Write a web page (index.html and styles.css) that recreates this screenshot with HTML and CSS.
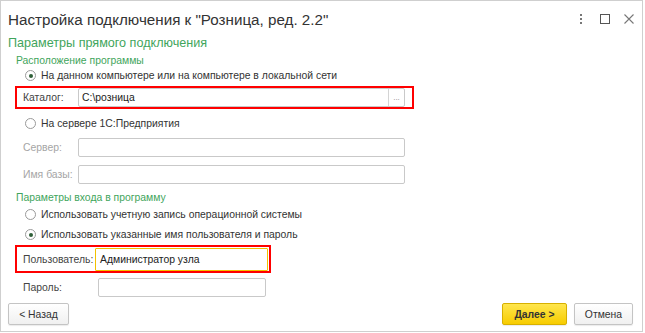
FILE: index.html
```html
<!DOCTYPE html>
<html lang="ru">
<head>
<meta charset="utf-8">
<link rel="stylesheet" href="styles.css">
</head>
<body>
<div class="window">
  <div class="header">
    <div class="title">Настройка подключения к "Розница, ред. 2.2"</div>
    <div class="tools">
      <svg class="tool" width="12" height="12" viewBox="0 0 12 12"><rect x="5" y="1" width="2" height="2" fill="#777"/><rect x="5" y="5" width="2" height="2" fill="#777"/><rect x="5" y="9" width="2" height="2" fill="#777"/></svg>
      <svg class="tool" width="12" height="12" viewBox="0 0 12 12"><rect x="1.5" y="1.5" width="9" height="9" fill="none" stroke="#555" stroke-width="1"/></svg>
      <svg class="tool" width="12" height="12" viewBox="0 0 12 12"><path d="M1.5 1.5 L10.5 10.5 M10.5 1.5 L1.5 10.5" stroke="#777" stroke-width="1.1"/></svg>
    </div>
  </div>
  <div class="content">
    <div class="section-title">Параметры прямого подключения</div>
    <div class="group">
      <div class="group-title first">Расположение программы</div>
      <div class="radio-row r1"><span class="radio checked"></span><span>На данном компьютере или на компьютере в локальной сети</span></div>
      <div class="field-row marked">
        <span class="label">Каталог:</span>
        <div class="input wide with-btn"><span class="value">C:\розница</span><span class="pick">...</span></div>
      </div>
      <div class="radio-row r2"><span class="radio"></span><span>На сервере 1С:Предприятия</span></div>
      <div class="field-row plain">
        <span class="label disabled">Сервер:</span>
        <div class="input wide"></div>
      </div>
      <div class="field-row plain">
        <span class="label disabled">Имя базы:</span>
        <div class="input wide"></div>
      </div>
      <div class="group-title second">Параметры входа в программу</div>
      <div class="radio-row r3"><span class="radio"></span><span>Использовать учетную запись операционной системы</span></div>
      <div class="radio-row r4"><span class="radio checked"></span><span>Использовать указанные имя пользователя и пароль</span></div>
      <div class="field-row marked user">
        <span class="label">Пользователь:</span>
        <div class="input focused"><span class="value">Администратор узла</span></div>
      </div>
      <div class="field-row plain pass">
        <span class="label">Пароль:</span>
        <div class="input short"></div>
      </div>
    </div>
  </div>
  <div class="footer">
    <button class="btn back">&lt; Назад</button>
    <div class="spacer"></div>
    <button class="btn primary">Далее &gt;</button>
    <button class="btn cancel">Отмена</button>
  </div>
</div>
</body>
</html>
```
FILE: styles.css
```css
html, body {
  margin: 0;
  padding: 0;
  background: #ffffff;
}
body {
  font-family: "Liberation Sans", Arial, sans-serif;
  font-size: 10.4px;
  color: #333333;
}
.window {
  width: 641px;
  height: 330px;
  border: 1px solid #cfcfcf;
  display: flex;
  flex-direction: column;
}
.header {
  height: 33px;
  display: flex;
  align-items: center;
  padding: 0 7px 0 7px;
}
.title {
  font-size: 15.2px;
  color: #333;
  flex: 1;
  padding-top: 3px;
}
.tools {
  display: flex;
  gap: 12px;
  align-items: center;
  padding-top: 2px;
}
.tool { display: block; }
.content {
  flex: 1;
  padding: 0 0 0 7px;
}
.section-title {
  color: #3fa55c;
  font-size: 12.6px;
  height: 16px;
  line-height: 16px;
  margin-top: 1px;
}
.group {
  padding-left: 8px;
}
.group-title {
  color: #3fa55c;
  font-size: 10.4px;
  height: 14px;
  line-height: 14px;
}
.group-title.first { margin-top: 3px; }
.group-title.second { margin-top: 7px; }
.radio-row {
  display: flex;
  align-items: center;
  height: 17px;
  padding-left: 9px;
  gap: 5px;
  white-space: nowrap;
}
.radio-row.r1 { margin-top: -1px; }
.radio-row.r2 { margin-top: 8px; }
.radio-row.r3 { margin-top: 1px; }
.radio-row.r4 { margin-top: 3px; }
.radio {
  width: 11px;
  height: 11px;
  border: 1px solid #9a9a9a;
  border-radius: 50%;
  box-sizing: border-box;
  display: inline-flex;
  align-items: center;
  justify-content: center;
  background: #fff;
  flex: none;
}
.radio.checked::after {
  content: "";
  width: 4px;
  height: 4px;
  border-radius: 50%;
  background: #2f5f38;
}
.field-row {
  display: flex;
  align-items: center;
  padding-left: 6px;
  margin-left: 1px;
}
.field-row.marked {
  outline: 2px solid #ff0000;
  width: 382px;
  padding-right: 7px;
  margin-top: 4px;
  margin-bottom: 5px;
}
.field-row.plain {
  height: 19px;
  margin-top: 6px;
}
.field-row.plain + .field-row.plain { margin-top: 8px; }
.label {
  width: 55px;
  flex: none;
  color: #444;
  white-space: nowrap;
}
.label.disabled { color: #a5a5a5; }
.input {
  height: 19px;
  box-sizing: border-box;
  border: 1px solid #c9c9c9;
  border-radius: 2px;
  display: flex;
  align-items: center;
  background: #fff;
  padding-left: 3px;
  color: #222;
  flex: none;
}
.input.wide { width: 327px; }
.input.with-btn { padding-right: 0; }
.input .value { flex: 1; }
.pick {
  width: 15px;
  height: 17px;
  border-left: 1px solid #d4d4d4;
  color: #888;
  font-size: 8px;
  text-align: center;
  line-height: 17px;
}
.field-row.user {
  width: 245px;
  height: 24px;
  padding-right: 1px;
  margin-top: 4px;
  margin-bottom: 0;
}
.field-row.user .label { width: 72px; }
.input.focused {
  width: 173px;
  height: 23px;
  border: 1px solid #f2c200;
  border-radius: 1px;
  padding-left: 4px;
}
.field-row.pass { margin-top: 7px; }
.field-row.pass .label { width: 75px; }
.input.short { width: 168px; }
.footer {
  display: flex;
  align-items: center;
  padding: 0 9px 4px 7px;
  height: 26px;
  gap: 7px;
}
.spacer { flex: 1; }
.btn {
  font-family: "Liberation Sans", Arial, sans-serif;
  font-size: 10.4px;
  height: 22px;
  border: 1px solid #c4c4c4;
  border-radius: 2px;
  background: linear-gradient(#ffffff, #f0f0f0);
  color: #333;
  padding: 0;
  box-shadow: 0 1px 1px rgba(0,0,0,0.08);
}
.btn.back { width: 61px; }
.btn.primary {
  width: 65px;
  font-weight: bold;
  background: linear-gradient(#ffe64d, #f7cc00);
  border-color: #d7b000;
  color: #333;
}
.btn.cancel { width: 59px; }
```
